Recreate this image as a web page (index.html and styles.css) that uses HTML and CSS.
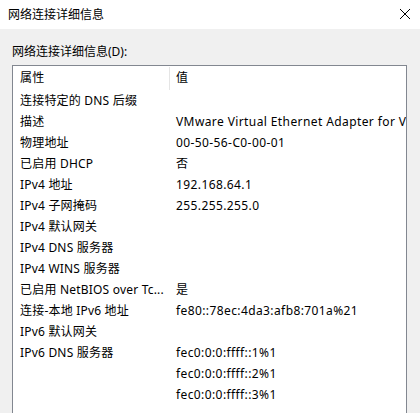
FILE: index.html
```html
<!DOCTYPE html>
<html lang="zh-CN">
<head>
<meta charset="utf-8">
<link rel="stylesheet" href="styles.css">
</head>
<body>
<div class="window">
  <div class="titlebar">
    <span class="title">网络连接详细信息</span>
    <svg class="close" width="12" height="12" viewBox="0 0 12 12"><path d="M1 1 L11 11 M11 1 L1 11" stroke="#000" stroke-width="1" fill="none"/></svg>
  </div>
  <div class="content">
    <div class="label">网络连接详细信息(D):</div>
    <div class="listbox">
      <div class="row header"><div class="c1">属性</div><div class="c2">值</div></div>
      <div class="row"><div class="c1">连接特定的 DNS 后缀</div><div class="c2"></div></div>
      <div class="row"><div class="c1">描述</div><div class="c2">VMware Virtual Ethernet Adapter for VMnet8</div></div>
      <div class="row"><div class="c1">物理地址</div><div class="c2">00-50-56-C0-00-01</div></div>
      <div class="row"><div class="c1">已启用 DHCP</div><div class="c2">否</div></div>
      <div class="row"><div class="c1">IPv4 地址</div><div class="c2">192.168.64.1</div></div>
      <div class="row"><div class="c1">IPv4 子网掩码</div><div class="c2">255.255.255.0</div></div>
      <div class="row"><div class="c1">IPv4 默认网关</div><div class="c2"></div></div>
      <div class="row"><div class="c1">IPv4 DNS 服务器</div><div class="c2"></div></div>
      <div class="row"><div class="c1">IPv4 WINS 服务器</div><div class="c2"></div></div>
      <div class="row"><div class="c1">已启用 NetBIOS over Tc...</div><div class="c2">是</div></div>
      <div class="row"><div class="c1">连接-本地 IPv6 地址</div><div class="c2">fe80::78ec:4da3:afb8:701a%21</div></div>
      <div class="row"><div class="c1">IPv6 默认网关</div><div class="c2"></div></div>
      <div class="row"><div class="c1">IPv6 DNS 服务器</div><div class="c2">fec0:0:0:ffff::1%1</div></div>
      <div class="row"><div class="c1"></div><div class="c2">fec0:0:0:ffff::2%1</div></div>
      <div class="row"><div class="c1"></div><div class="c2">fec0:0:0:ffff::3%1</div></div>
      <div class="row"><div class="c1"></div><div class="c2"></div></div>
    </div>
  </div>
</div>
</body>
</html>
```

FILE: styles.css
```css
html, body {
  margin: 0;
  padding: 0;
  background: #f0f0f0;
  overflow: hidden;
}
.window {
  width: 420px;
  height: 413px;
  overflow: hidden;
  font-family: "Noto Sans", "Noto Sans CJK SC", sans-serif;
  font-size: 12px;
  color: #000;
}
.titlebar {
  height: 29px;
  background: #fff;
  display: flex;
  align-items: center;
  justify-content: space-between;
  padding: 0 9px 0 8px;
}
.title {
  font-size: 12px;
  line-height: 16px;
}
.close {
  display: block;
  margin-top: -2px;
}
.content {
  padding: 15px 13px 0 12px;
}
.label {
  line-height: 16px;
  height: 21px;
}
.listbox {
  background: #fff;
  border: 1px solid #828790;
  border-bottom: none;
  height: 400px;
  overflow: hidden;
}
.row {
  display: flex;
  height: 21px;
  line-height: 21px;
  white-space: nowrap;
}
.c1 {
  width: 157px;
  padding-left: 7px;
  box-sizing: border-box;
  overflow: hidden;
  flex: none;
  letter-spacing: 0.2px;
}
.c2 {
  padding-left: 6px;
  overflow: hidden;
  flex: 1;
  letter-spacing: 0.4px;
}
.header {
  height: 24px;
  line-height: 24px;
}
.header .c1 {
  border-right: 1px solid #e5e5e5;
  height: 23px;
  margin-top: 1px;
  line-height: 22px;
}
.header .c2 {
  line-height: 24px;
}
```
